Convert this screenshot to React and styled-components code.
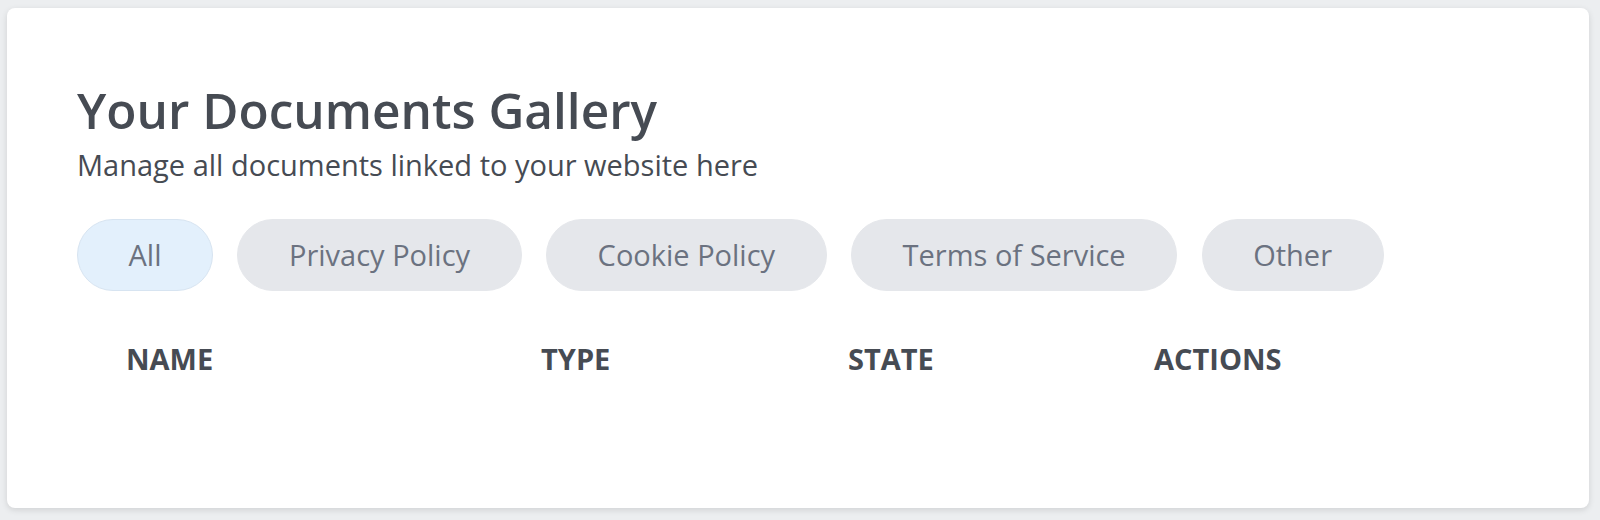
import React from "react";
import styled, { createGlobalStyle } from "styled-components";

const Global = createGlobalStyle`
  html, body { margin: 0; padding: 0; background: #eceef0; }
  body { font-family: "Open Sans", "Noto Sans", sans-serif; }
`;

const Page = styled.div`
  padding: 8px 11px 12px 7px;
  box-sizing: border-box;
  width: 1600px;
  height: 520px;
`;

const Card = styled.section`
  background: #ffffff;
  border-radius: 8px;
  box-shadow: 0 2px 6px rgba(0, 0, 0, 0.12);
  padding: 74px 68px 0 70px;
  height: 500px;
  box-sizing: border-box;
`;

const Title = styled.h1`
  margin: 0;
  font-size: 49.5px;
  font-weight: 600;
  line-height: 56px;
  color: #464b53;
`;

const Subtitle = styled.p`
  margin: 7px 0 0;
  font-size: 29px;
  line-height: 40px;
  color: #464b53;
`;

const Filters = styled.div`
  display: flex;
  gap: 24.5px;
  margin-top: 34px;
`;

const Pill = styled.button`
  font-family: inherit;
  font-size: 29px;
  line-height: 40px;
  height: 72px;
  padding: 0 50.5px;
  border-radius: 36px;
  border: 1px solid ${(p) => (p.$active ? "#d7e4f1" : "#e5e7eb")};
  background: ${(p) => (p.$active ? "#e3f0fc" : "#e5e7eb")};
  color: #6b7280;
  cursor: pointer;
`;

const HeaderRow = styled.div`
  display: grid;
  grid-template-columns: 415px 307px 306px 1fr;
  margin-top: 50px;
`;

const HeaderCell = styled.div`
  padding-left: 49px;
  font-size: 29px;
  font-weight: 700;
  line-height: 36px;
  color: #464b53;
  text-transform: uppercase;
`;

const tabs = ["All", "Privacy Policy", "Cookie Policy", "Terms of Service", "Other"];
const columns = ["Name", "Type", "State", "Actions"];

export default function App() {
  return (
    <>
      <Global />
      <Page>
        <Card>
          <Title>Your Documents Gallery</Title>
          <Subtitle>Manage all documents linked to your website here</Subtitle>
          <Filters>
            {tabs.map((t, i) => (
              <Pill key={t} $active={i === 0}>
                {t}
              </Pill>
            ))}
          </Filters>
          <HeaderRow>
            {columns.map((c) => (
              <HeaderCell key={c}>{c}</HeaderCell>
            ))}
          </HeaderRow>
        </Card>
      </Page>
    </>
  );
}
